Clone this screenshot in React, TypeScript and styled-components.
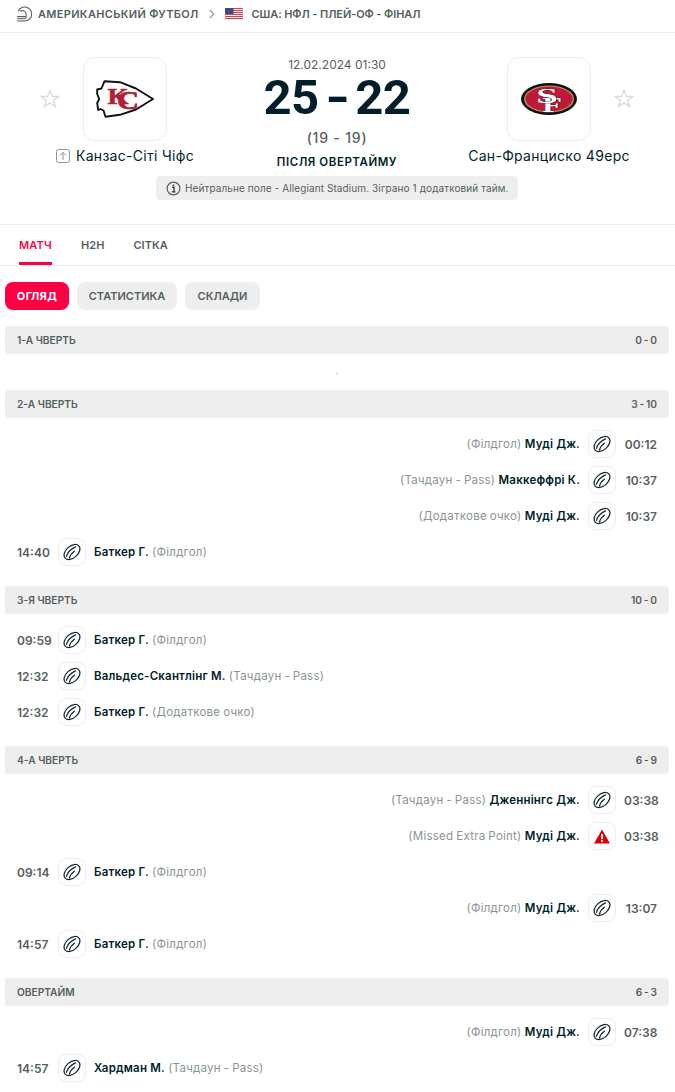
import React from "react";
import styled, { createGlobalStyle } from "styled-components";

const Global = createGlobalStyle`
  html, body { margin: 0; padding: 0; background: #fff; }
  body { font-family: Inter, "Noto Sans", "Liberation Sans", sans-serif; color: #001e28; }
  * { box-sizing: border-box; }
`;

const Page = styled.div`
  width: 675px;
  height: 1092px;
  overflow: hidden;
  background: #fff;
`;

const Breadcrumb = styled.nav`
  display: flex;
  align-items: center;
  height: 33px;
  padding: 0 0 4px 16px;
  border-bottom: 1px solid #eeeeee;
  font-size: 11px;
  font-weight: 600;
  color: #555e61;
  text-transform: uppercase;
`;
const CrumbText = styled.span<{ $ml: number; $ls: number }>`
  margin-left: ${(p) => p.$ml}px;
  letter-spacing: ${(p) => p.$ls}px;
  white-space: nowrap;
`;
const CrumbChevron = styled.svg`
  margin: 0 10px;
  flex: none;
`;

const Header = styled.header`
  height: 192px;
  padding-right: 1px;
  border-bottom: 1px solid #eeeeee;
  display: flex;
  flex-direction: column;
  align-items: center;
`;
const Teams = styled.div`
  width: 674px;
  display: grid;
  grid-template-columns: 250px 174px 250px;
`;
const TeamCol = styled.div`
  padding-top: 24px;
  display: flex;
  flex-direction: column;
  align-items: center;
`;
const LogoRow = styled.div`
  width: 100%;
  display: grid;
  grid-template-columns: 1fr 84px 1fr;
  align-items: center;
`;
const StarIcon = styled.svg<{ $side: "l" | "r" }>`
  justify-self: ${(p) => (p.$side === "l" ? "end" : "start")};
  margin: ${(p) => (p.$side === "l" ? "0 23px 0 0" : "0 0 0 23px")};
`;
const LogoBox = styled.div`
  width: 84px;
  height: 84px;
  border: 1px solid #eeeeee;
  border-radius: 12px;
  display: flex;
  align-items: center;
  justify-content: center;
`;
const TeamName = styled.div`
  margin-top: 6px;
  height: 18px;
  display: flex;
  align-items: center;
  gap: 6px;
  font-size: 14px;
  line-height: 18px;
  white-space: nowrap;
  letter-spacing: 0.3px;
  color: #001e28;
`;
const Center = styled.div`
  padding-top: 24px;
  display: flex;
  flex-direction: column;
  align-items: center;
`;
const DateText = styled.div`
  font-size: 12px;
  line-height: 16px;
  color: #555e61;
  white-space: nowrap;
`;
const Score = styled.div`
  margin-top: 3px;
  height: 44px;
  display: flex;
  align-items: center;
  gap: 9px;
  font-family: Roboto, Inter, sans-serif;
  font-size: 49px;
  font-weight: 700;
  line-height: 44px;
  color: #001e28;
  white-space: nowrap;
  letter-spacing: -0.6px;
`;
const ScoreDash = styled.span`
  display: inline-block;
  transform: scaleX(1.3);
`;
const SubScore = styled.div`
  margin-top: 9px;
  font-size: 14px;
  font-weight: 500;
  line-height: 18px;
  letter-spacing: 0.8px;
  color: #555e61;
  white-space: nowrap;
`;
const Status = styled.div`
  margin-top: 7px;
  font-size: 11.5px;
  font-weight: 600;
  line-height: 16px;
  letter-spacing: 0.55px;
  white-space: nowrap;
  color: #001e28;
`;
const InfoPill = styled.div`
  margin-top: 6px;
  height: 24px;
  width: 362px;
  display: flex;
  align-items: center;
  gap: 4px;
  padding-left: 10px;
  background: #eeeeee;
  border-radius: 4px;
  font-size: 10px;
  letter-spacing: 0.1px;
  color: #555e61;
  white-space: nowrap;
`;

const Tabs = styled.div`
  height: 41px;
  display: flex;
  padding-left: 19px;
  gap: 29px;
  border-bottom: 1px solid #eeeeee;
`;
const Tab = styled.div<{ $active?: boolean }>`
  height: 40px;
  padding-top: 14px;
  font-size: 11px;
  line-height: 13px;
  font-weight: 600;
  letter-spacing: ${(p) => (p.$active ? 0.2 : 0.05)}px;
  color: ${(p) => (p.$active ? "#ff0046" : "#555e61")};
  border-bottom: 3px solid ${(p) => (p.$active ? "#ff0046" : "transparent")};
`;

const Pills = styled.div`
  display: flex;
  gap: 8px;
  padding: 16px 5px;
`;
const Pill = styled.div<{ $active?: boolean; $w: number }>`
  width: ${(p) => p.$w}px;
  height: 28px;
  border-radius: 8px;
  display: flex;
  align-items: center;
  justify-content: center;
  font-size: 11px;
  font-weight: ${(p) => (p.$active ? 700 : 600)};
  letter-spacing: ${(p) => (p.$active ? 0.4 : 0)}px;
  background: ${(p) => (p.$active ? "#ff0046" : "#eeeeee")};
  color: ${(p) => (p.$active ? "#ffffff" : "#555e61")};
`;

const Section = styled.section`
  padding: 0 6px 0 5px;
  margin-bottom: 16px;
`;
const SectionHead = styled.div`
  height: 28px;
  padding: 0 12px;
  display: flex;
  align-items: center;
  justify-content: space-between;
  background: #eeeeee;
  border-radius: 4px;
  font-size: 10.2px;
  font-weight: 600;
  letter-spacing: 0;
  color: #555e61;
`;
const SectionScore = styled.span`
  word-spacing: -0.8px;
`;
const Empty = styled.div`
  height: 20px;
  display: flex;
  align-items: flex-start;
  justify-content: center;
  padding-top: 11px;
  font-size: 10px;
  line-height: 10px;
  color: #8a9396;
`;
const Rows = styled.div`
  padding-top: 8px;
`;
const Row = styled.div<{ $right?: boolean }>`
  height: 36px;
  padding: 0 12px;
  display: flex;
  align-items: center;
  gap: 8px;
  justify-content: ${(p) => (p.$right ? "flex-end" : "flex-start")};
`;
const Time = styled.span<{ $right?: boolean }>`
  width: 33px;
  flex: none;
  font-size: 12px;
  font-weight: 600;
  color: #555e61;
  letter-spacing: 0;
  white-space: nowrap;
  text-align: ${(p) => (p.$right ? "right" : "left")};
`;
const EventIcon = styled.div`
  width: 28px;
  height: 28px;
  flex: none;
  border: 1px solid #eeeeee;
  border-radius: 8px;
  display: flex;
  align-items: center;
  justify-content: center;
`;
const Text = styled.span`
  font-size: 11.5px;
  line-height: 16px;
  white-space: nowrap;
`;
const Name = styled.strong`
  font-weight: 600;
  letter-spacing: 0.2px;
  color: #001e28;
`;
const Detail = styled.span`
  color: #8a9396;
  font-weight: 400;
  letter-spacing: 0.25px;
  word-spacing: -0.6px;
`;

const Star = ({ side }: { side: "l" | "r" }) => (
  <StarIcon $side={side} width="20" height="20" viewBox="0 0 20 20" fill="none" stroke="#d8dbdc" strokeWidth="1.3">
    <path d="M10 1.5l2.4 6h6.3l-5.1 3.9 1.9 6.3-5.5-3.8-5.5 3.8 1.9-6.3-5.1-3.9h6.3z" />
  </StarIcon>
);

const SportIcon = () => (
  <svg width="16" height="16" viewBox="0 0 16 16" fill="none" stroke="#555e61" strokeWidth="1.1">
    <path d="M2.2 5.4A7 7 0 1 1 9 15H1.2" />
    <path d="M1.2 12.8h8.4M1.2 10.6H10M4.2 5.2C6.5 4 9.5 4.5 10 7.5v5" />
  </svg>
);

const UsFlag = () => (
  <svg width="18" height="12" viewBox="0 0 18 12" style={{ flex: "none" }}>
    <rect width="18" height="12" fill="#f3eaea" />
    {[0, 2, 4, 6, 8, 10].map((y) => (
      <rect key={y} y={y} width="18" height="1" fill="#c8465a" />
    ))}
    <rect width="8.5" height="6" fill="#3f4a80" />
  </svg>
);

const Info = () => (
  <svg width="15" height="15" viewBox="0 0 15 15" fill="none" style={{ flex: "none" }}>
    <circle cx="7.5" cy="7.5" r="6.4" stroke="#555e61" strokeWidth="1.2" />
    <path d="M6 6.4h2v4.2M5.8 10.8h3.6" stroke="#30393c" strokeWidth="1.3" />
    <rect x="6.6" y="3.6" width="1.6" height="1.6" fill="#30393c" />
  </svg>
);

const UpBox = () => (
  <svg width="14" height="14" viewBox="0 0 14 14" fill="none" stroke="#8a9396" strokeWidth="1">
    <rect x="0.5" y="0.5" width="13" height="13" rx="2" />
    <path d="M7 11V3.5M3.8 6.6L7 3.4l3.2 3.2" />
  </svg>
);

const LogoSerif = '"Liberation Serif", serif';

const KcLogo = () => (
  <svg width="58" height="38" viewBox="0 0 58 38">
    <path
      d="M1.2 9.5 L5.5 8.5 L8.5 1.2 L24 2.2 L40 8.5 L57 19 L40 29.5 L24 34.8 L9.5 36.8 L7.5 30.5 L4.5 29 L2.2 30 L1.2 23 L3.2 19 L1.2 14 Z"
      fill="#fff"
      stroke="#111"
      strokeWidth="1.9"
      strokeLinejoin="round"
    />
    <text x="21" y="28.5" textLength="22" lengthAdjust="spacingAndGlyphs" fontFamily={LogoSerif} fontWeight="700" fontSize="25" fill="#b01f34" stroke="#b01f34" strokeWidth="0.7">C</text>
    <text x="11.5" y="24" textLength="21" lengthAdjust="spacingAndGlyphs" fontFamily={LogoSerif} fontWeight="700" fontSize="23" fill="#b01f34" stroke="#b01f34" strokeWidth="0.6">K</text>
  </svg>
);

const SfLogo = () => (
  <svg width="56" height="32" viewBox="0 0 56 32">
    <ellipse cx="28" cy="16" rx="28" ry="16" fill="#111" />
    <ellipse cx="28" cy="16" rx="25" ry="13.6" fill="#b3995d" />
    <ellipse cx="28" cy="16" rx="23.6" ry="12.4" fill="#c1183a" />
    <text x="21" y="29" textLength="20" lengthAdjust="spacingAndGlyphs" fontFamily={LogoSerif} fontWeight="700" fontSize="20" fill="#fff" stroke="#111" strokeWidth="0.6" paintOrder="stroke">F</text>
    <text x="15" y="20" textLength="22" lengthAdjust="spacingAndGlyphs" fontFamily={LogoSerif} fontWeight="700" fontSize="22" fill="#fff" stroke="#111" strokeWidth="0.6" paintOrder="stroke">S</text>
  </svg>
);

const Ball = () => (
  <svg width="18" height="18" viewBox="0 0 18 18" fill="none" stroke="#1a2a30" strokeWidth="1.25" strokeLinecap="round">
    <ellipse cx="9" cy="9" rx="9.2" ry="5.9" transform="rotate(-42 9 9)" />
    <path d="M3.4 13.4C4.2 10 7.8 5.6 12.6 3.8" />
    <path d="M6.4 15.2C7 12.6 9 9.8 11.4 8.2" />
  </svg>
);

const Warn = () => (
  <svg width="16" height="15" viewBox="0 0 16 15">
    <path d="M8 0.5L16 14.5H0Z" fill="#e00000" />
    <rect x="7.1" y="5" width="1.8" height="5.2" fill="#fff" />
    <rect x="7.1" y="11" width="1.8" height="1.8" fill="#fff" />
  </svg>
);

type Ev = { r?: boolean; t: string; n: string; d: string; warn?: boolean };
type Sec = { title: string; score: string; events: Ev[] };

const sections: Sec[] = [
  { title: "1-А ЧВЕРТЬ", score: "0 - 0", events: [] },
  {
    title: "2-А ЧВЕРТЬ",
    score: "3 - 10",
    events: [
      { r: true, t: "00:12", n: "Муді Дж.", d: "(Філдгол)" },
      { r: true, t: "10:37", n: "Маккеффрі К.", d: "(Тачдаун - Pass)" },
      { r: true, t: "10:37", n: "Муді Дж.", d: "(Додаткове очко)" },
      { t: "14:40", n: "Баткер Г.", d: "(Філдгол)" },
    ],
  },
  {
    title: "3-Я ЧВЕРТЬ",
    score: "10 - 0",
    events: [
      { t: "09:59", n: "Баткер Г.", d: "(Філдгол)" },
      { t: "12:32", n: "Вальдес-Скантлінг М.", d: "(Тачдаун - Pass)" },
      { t: "12:32", n: "Баткер Г.", d: "(Додаткове очко)" },
    ],
  },
  {
    title: "4-А ЧВЕРТЬ",
    score: "6 - 9",
    events: [
      { r: true, t: "03:38", n: "Дженнінгс Дж.", d: "(Тачдаун - Pass)" },
      { r: true, t: "03:38", n: "Муді Дж.", d: "(Missed Extra Point)", warn: true },
      { t: "09:14", n: "Баткер Г.", d: "(Філдгол)" },
      { r: true, t: "13:07", n: "Муді Дж.", d: "(Філдгол)" },
      { t: "14:57", n: "Баткер Г.", d: "(Філдгол)" },
    ],
  },
  {
    title: "ОВЕРТАЙМ",
    score: "6 - 3",
    events: [
      { r: true, t: "07:38", n: "Муді Дж.", d: "(Філдгол)" },
      { t: "14:57", n: "Хардман М.", d: "(Тачдаун - Pass)" },
    ],
  },
];

const EventRow = ({ e }: { e: Ev }) => {
  const icon = <EventIcon>{e.warn ? <Warn /> : <Ball />}</EventIcon>;
  return e.r ? (
    <Row $right>
      <Text>
        <Detail>{e.d}</Detail> <Name>{e.n}</Name>
      </Text>
      {icon}
      <Time $right>{e.t}</Time>
    </Row>
  ) : (
    <Row>
      <Time>{e.t}</Time>
      {icon}
      <Text>
        <Name>{e.n}</Name> <Detail>{e.d}</Detail>
      </Text>
    </Row>
  );
};

export default function App() {
  return (
    <Page>
      <Global />
      <Breadcrumb>
        <SportIcon />
        <CrumbText $ml={6} $ls={0.32}>Американський футбол</CrumbText>
        <CrumbChevron width="6" height="10" viewBox="0 0 6 10" fill="none" stroke="#8a9396" strokeWidth="1.1">
          <path d="M0.8 1l4 4-4 4" />
        </CrumbChevron>
        <UsFlag />
        <CrumbText $ml={9} $ls={-0.08}>США: НФЛ - Плей-оф - Фінал</CrumbText>
      </Breadcrumb>
      <Header>
        <Teams>
          <TeamCol>
            <LogoRow>
              <Star side="l" />
              <LogoBox>
                <KcLogo />
              </LogoBox>
            </LogoRow>
            <TeamName>
              <UpBox />
              Канзас-Сіті Чіфс
            </TeamName>
          </TeamCol>
          <Center>
            <DateText>12.02.2024 01:30</DateText>
            <Score>
              <span>25</span>
              <ScoreDash>-</ScoreDash>
              <span>22</span>
            </Score>
            <SubScore>(19 - 19)</SubScore>
            <Status>ПІСЛЯ ОВЕРТАЙМУ</Status>
          </Center>
          <TeamCol>
            <LogoRow>
              <span />
              <LogoBox>
                <SfLogo />
              </LogoBox>
              <Star side="r" />
            </LogoRow>
            <TeamName>Сан-Франциско 49ерс</TeamName>
          </TeamCol>
        </Teams>
        <InfoPill>
          <Info />
          Нейтральне поле - Allegiant Stadium. Зіграно 1 додатковий тайм.
        </InfoPill>
      </Header>
      <Tabs>
        <Tab $active>МАТЧ</Tab>
        <Tab>H2H</Tab>
        <Tab>СІТКА</Tab>
      </Tabs>
      <Pills>
        <Pill $active $w={64}>ОГЛЯД</Pill>
        <Pill $w={100}>СТАТИСТИКА</Pill>
        <Pill $w={75}>СКЛАДИ</Pill>
      </Pills>
      {sections.map((s) => (
        <Section key={s.title}>
          <SectionHead>
            <span>{s.title}</span>
            <SectionScore>{s.score}</SectionScore>
          </SectionHead>
          {s.events.length === 0 ? (
            <Empty>.</Empty>
          ) : (
            <Rows>
              {s.events.map((e, i) => (
                <EventRow key={i} e={e} />
              ))}
            </Rows>
          )}
        </Section>
      ))}
    </Page>
  );
}
